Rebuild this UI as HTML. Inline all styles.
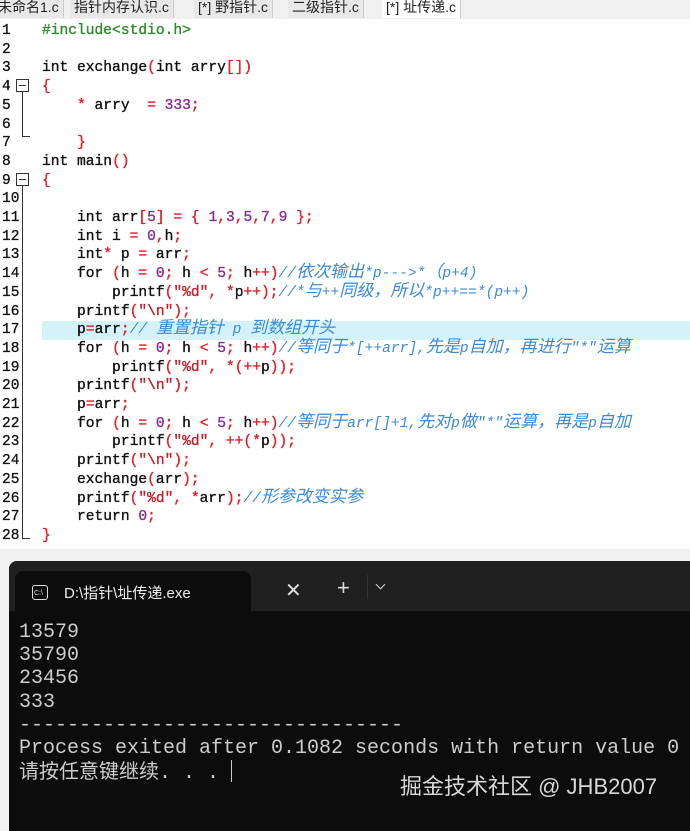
<!DOCTYPE html>
<html><head><meta charset="utf-8"><style>
*{margin:0;padding:0;box-sizing:border-box}
body{width:690px;height:821px;overflow:hidden;background:#f0f0f0;position:relative;font-family:"Liberation Sans","Noto Sans CJK SC",sans-serif}
.tabs{position:absolute;left:0;top:0;width:690px;height:18px;background:#f0f0f0;font-size:14px;color:#222;white-space:nowrap}
.tabs span{position:absolute;top:-3px;height:21px;padding:0 4px;border-right:1px solid #ccc;background:#e8e8e8}
.ed{position:absolute;left:0;top:19px;width:690px;height:530px;background:#fff}
.code{position:absolute;left:42px;font:14.6px/18.7px "Liberation Mono","Noto Sans CJK SC",monospace;color:#111;white-space:pre;-webkit-text-stroke:0.35px currentColor}
.r{color:#e0202a}.n{color:#8a2a9a}.s{color:#c0202a}.g{color:#2a8a2a}.c{color:#3a8ad8;font-style:italic;-webkit-text-stroke:0}
.z{font-size:17px;line-height:10px}
.hl{position:absolute;left:42px;width:648px;height:19px;background:#d4f3f8}
.term{position:absolute;left:9px;top:561px;width:690px;height:270px;background:#0c0c0c;border-radius:8px 0 0 0;overflow:hidden}
.bar{position:absolute;left:0;top:0;width:100%;height:50px;background:#202020}
.ttab{position:absolute;left:6px;top:10px;width:236px;height:42px;background:#0c0c0c;border-radius:8px 8px 0 0}
.out{position:absolute;left:10px;top:60px;font:20px/23.2px "Liberation Mono","Noto Sans CJK SC",monospace;color:#ccc;white-space:pre}
</style></head><body>
<div class="tabs"><span style="left:-6px">未命名1.c</span><span style="left:70px">指针内存认识.c</span><span style="left:194px">[*] 野指针.c</span><span style="left:288px">二级指针.c</span><span style="left:382px;background:#fff">[*] 址传递.c</span></div>
<div class="ed">
<div class="hl" style="top:302px"></div>
<div style="position:absolute;left:0;top:0;width:30px;height:530px;font:14.5px/18.7px 'Liberation Mono',monospace;color:#111;padding-top:3px;padding-left:2px;white-space:pre;-webkit-text-stroke:0.3px #111">1
2
3
4
5
6
7
8
9
10
11
12
13
14
15
16
17
18
19
20
21
22
23
24
25
26
27
28</div>
<div style="position:absolute;left:16px;top:60px;width:13px;height:13px;border:1px solid #333;background:#fff"></div>
<div style="position:absolute;left:19px;top:66px;width:7px;height:1px;background:#333"></div>
<div style="position:absolute;left:22px;top:73px;width:1px;height:44px;background:#333"></div>
<div style="position:absolute;left:22px;top:117px;width:8px;height:1px;background:#333"></div>
<div style="position:absolute;left:16px;top:154px;width:13px;height:13px;border:1px solid #333;background:#fff"></div>
<div style="position:absolute;left:19px;top:160px;width:7px;height:1px;background:#333"></div>
<div style="position:absolute;left:22px;top:167px;width:1px;height:352px;background:#333"></div>
<div style="position:absolute;left:22px;top:519px;width:8px;height:1px;background:#333"></div>
<div class="code" style="top:3px"><span class="g">#include&lt;stdio.h&gt;</span>

int exchange<span class="r">(</span>int arry<span class="r">[])</span>
<span class="r">{</span>
    <span class="r">*</span> arry  <span class="r">=</span> <span class="n">333</span><span class="r">;</span>

    <span class="r">}</span>
int main<span class="r">()</span>
<span class="r">{</span>

    int arr<span class="r">[</span><span class="n">5</span><span class="r">] = {</span> <span class="n">1</span><span class="r">,</span><span class="n">3</span><span class="r">,</span><span class="n">5</span><span class="r">,</span><span class="n">7</span><span class="r">,</span><span class="n">9</span> <span class="r">};</span>
    int i <span class="r">=</span> <span class="n">0</span><span class="r">,</span>h<span class="r">;</span>
    int<span class="r">*</span> p <span class="r">=</span> arr<span class="r">;</span>
    for <span class="r">(</span>h <span class="r">=</span> <span class="n">0</span><span class="r">;</span> h <span class="r">&lt;</span> <span class="n">5</span><span class="r">;</span> h<span class="r">++)</span><span class="c">//<span class="z">依次输出</span>*p---&gt;*<span class="z">（</span>p+4)</span>
        printf<span class="r">(</span><span class="s">"%d"</span><span class="r">,</span> <span class="r">*</span>p<span class="r">++);</span><span class="c">//*<span class="z">与</span>++<span class="z">同级，所以</span>*p++==*(p++)</span>
    printf<span class="r">(</span><span class="s">"\n"</span><span class="r">);</span>
    p<span class="r">=</span>arr<span class="r">;</span><span class="c">// <span class="z">重置指针</span> p <span class="z">到数组开头</span></span>
    for <span class="r">(</span>h <span class="r">=</span> <span class="n">0</span><span class="r">;</span> h <span class="r">&lt;</span> <span class="n">5</span><span class="r">;</span> h<span class="r">++)</span><span class="c">//<span class="z">等同于</span>*[++arr],<span class="z">先是</span>p<span class="z">自加，再进行</span>"*"<span class="z">运算</span></span>
        printf<span class="r">(</span><span class="s">"%d"</span><span class="r">,</span> <span class="r">*(++</span>p<span class="r">));</span>
    printf<span class="r">(</span><span class="s">"\n"</span><span class="r">);</span>
    p<span class="r">=</span>arr<span class="r">;</span>
    for <span class="r">(</span>h <span class="r">=</span> <span class="n">0</span><span class="r">;</span> h <span class="r">&lt;</span> <span class="n">5</span><span class="r">;</span> h<span class="r">++)</span><span class="c">//<span class="z">等同于</span>arr[]+1,<span class="z">先对</span>p<span class="z">做</span>"*"<span class="z">运算，再是</span>p<span class="z">自加</span></span>
        printf<span class="r">(</span><span class="s">"%d"</span><span class="r">, ++(*</span>p<span class="r">));</span>
    printf<span class="r">(</span><span class="s">"\n"</span><span class="r">);</span>
    exchange<span class="r">(</span>arr<span class="r">);</span>
    printf<span class="r">(</span><span class="s">"%d"</span><span class="r">,</span> <span class="r">*</span>arr<span class="r">);</span><span class="c">//<span class="z">形参改变实参</span></span>
    return <span class="n">0</span><span class="r">;</span>
<span class="r">}</span></div>
</div>
<div class="term">
<div class="bar"></div>
<div class="ttab">
<div style="position:absolute;left:17px;top:14px;width:16px;height:15px;border:1.5px solid #ddd;border-radius:3px;font:7px 'Liberation Sans';color:#ddd;padding:4px 0 0 1px">C:\</div>
<div style="position:absolute;left:49px;top:11px;font-size:15px;color:#eee">D:\指针\址传递.exe</div>
<div style="position:absolute;left:270px;top:7px;font-size:20px;color:#ddd">✕</div>
</div>
<div style="position:absolute;left:328px;top:16px;font-size:22px;color:#ddd;line-height:1">+</div>
<div style="position:absolute;left:358px;top:14px;width:1px;height:24px;background:#333"></div>
<div style="position:absolute;left:368px;top:20px;width:7px;height:7px;border-right:1.5px solid #ccc;border-bottom:1.5px solid #ccc;transform:rotate(45deg)"></div>
<div class="out">13579
35790
23456
333
--------------------------------
Process exited after 0.1082 seconds with return value 0
请按任意键继续. . . <span style="display:inline-block;width:1px;height:22px;background:#ccc;vertical-align:-4px"></span></div>
<div style="position:absolute;left:391px;top:208px;font-size:22px;color:#d8d8d8">掘金技术社区 @ JHB2007</div>
</div>
</body></html>
